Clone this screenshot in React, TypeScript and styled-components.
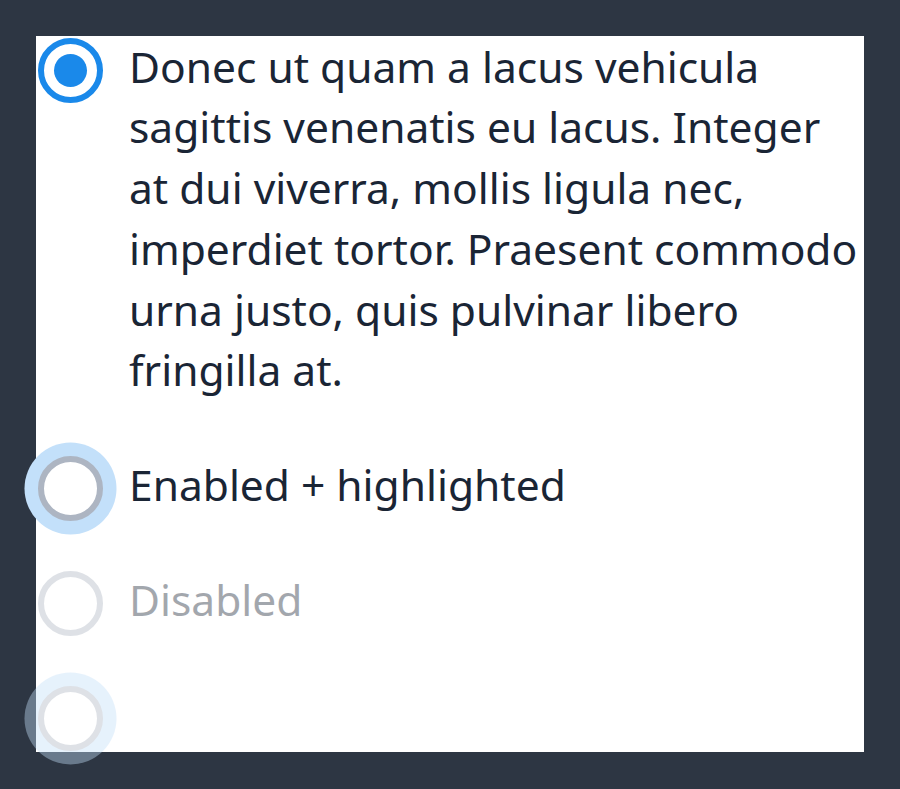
import React from "react";
import styled, { createGlobalStyle, css } from "styled-components";

const GlobalStyle = createGlobalStyle`
  html, body {
    margin: 0;
    padding: 0;
    background: #2d3643;
  }
  body {
    font-family: "Noto Sans", "Open Sans", sans-serif;
  }
`;

const Page = styled.div`
  padding: 36px;
  min-height: 789px;
  box-sizing: border-box;
`;

const Panel = styled.div`
  width: 828px;
  height: 716px;
  box-sizing: border-box;
  background: #ffffff;
  padding: 4px 0 0 2px;
`;

const Group = styled.div`
  display: flex;
  flex-direction: column;
  gap: 54px;
`;

const Item = styled.label<{ $disabled?: boolean }>`
  display: flex;
  align-items: flex-start;
  gap: 26px;
  opacity: ${(p) => (p.$disabled ? 0.4 : 1)};
  cursor: ${(p) => (p.$disabled ? "not-allowed" : "pointer")};
`;

const ControlSlot = styled.span`
  flex: 0 0 65px;
  height: 60.75px;
  display: flex;
  align-items: center;
  justify-content: center;
`;

const Control = styled.span<{ $checked?: boolean; $highlighted?: boolean }>`
  flex: 0 0 auto;
  width: 65px;
  height: 65px;
  box-sizing: border-box;
  border-radius: 50%;
  border: 6.5px solid ${(p) => (p.$checked ? "#1a89ea" : "#adb5c2")};
  background: #ffffff;
  display: flex;
  align-items: center;
  justify-content: center;
  ${(p) =>
    p.$highlighted &&
    css`
      box-shadow: 0 0 0 13.5px #c3e0fa;
    `}
`;

const Dot = styled.span`
  width: 33px;
  height: 33px;
  border-radius: 50%;
  background: #1a89ea;
`;

const Label = styled.span`
  font-size: 42.5px;
  line-height: 60.75px;
  color: #1a2535;
  margin: -3.4px 0 3.4px;
  white-space: nowrap;
`;

type RadioProps = {
  checked?: boolean;
  highlighted?: boolean;
  disabled?: boolean;
  children?: React.ReactNode;
};

function Radio({ checked, highlighted, disabled, children }: RadioProps) {
  return (
    <Item $disabled={disabled}>
      <ControlSlot>
        <Control $checked={checked} $highlighted={highlighted}>
          {checked && <Dot />}
        </Control>
      </ControlSlot>
      {children && <Label>{children}</Label>}
    </Item>
  );
}

export default function App() {
  return (
    <Page>
      <GlobalStyle />
      <Panel>
        <Group role="radiogroup">
          <Radio checked>
            Donec ut quam a lacus vehicula
            <br />
            sagittis venenatis eu lacus. Integer
            <br />
            at dui viverra, mollis ligula nec,
            <br />
            imperdiet tortor. Praesent commodo
            <br />
            urna justo, quis pulvinar libero
            <br />
            fringilla at.
          </Radio>
          <Radio highlighted>Enabled + highlighted</Radio>
          <Radio disabled>Disabled</Radio>
          <Radio disabled highlighted />
        </Group>
      </Panel>
    </Page>
  );
}
